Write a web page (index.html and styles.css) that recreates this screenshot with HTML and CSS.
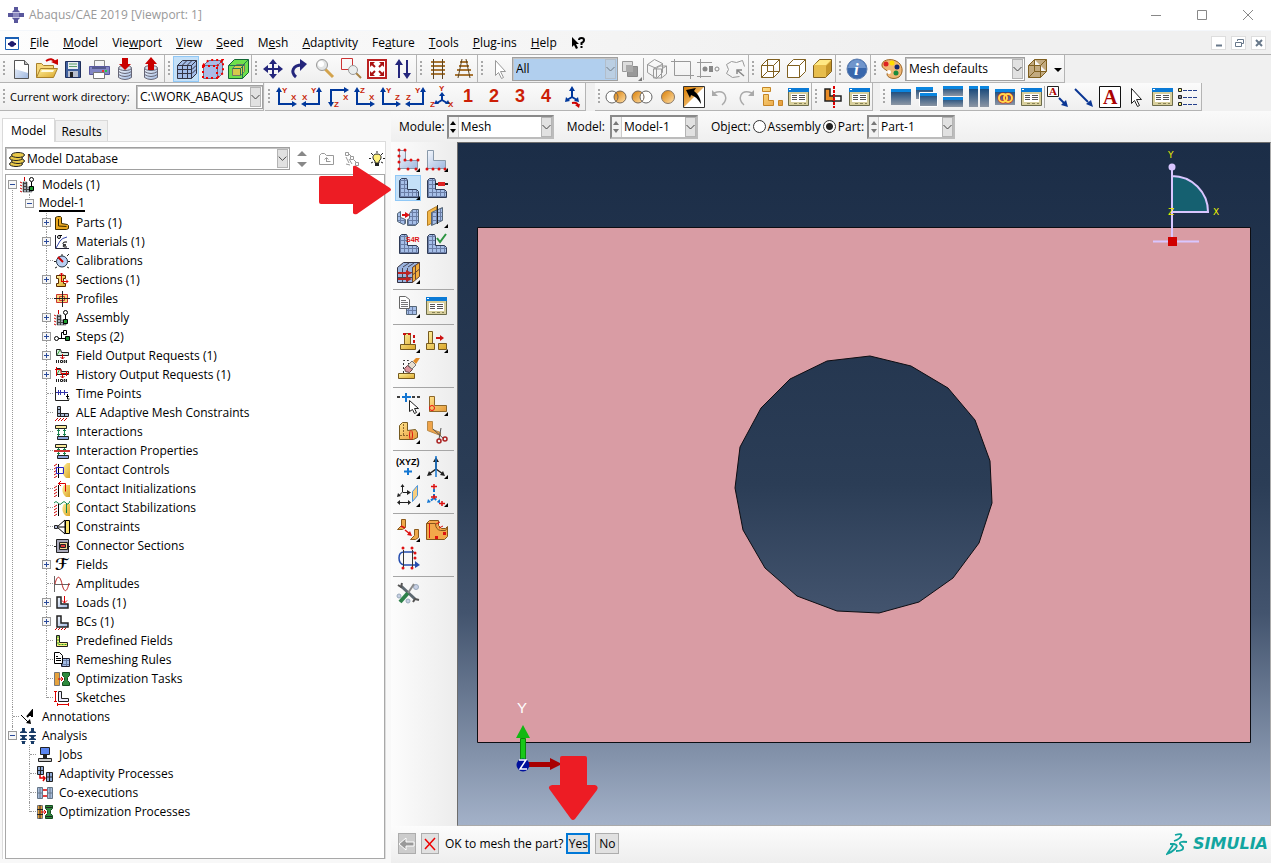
FILE: index.html
```html
<!DOCTYPE html>
<html lang="en">
<head>
<meta charset="utf-8">
<title>Abaqus/CAE 2019 [Viewport: 1]</title>
<link rel="stylesheet" href="styles.css">
</head>
<body>
<svg class="defs" width="0" height="0" aria-hidden="true">
  <defs>
    <linearGradient id="gold" x1="0" y1="0" x2="1" y2="1"><stop offset="0" stop-color="#fff2a0"/><stop offset="1" stop-color="#dba628"/></linearGradient>
    <linearGradient id="orange" x1="0" y1="0" x2="1" y2="1"><stop offset="0" stop-color="#d97c00"/><stop offset="1" stop-color="#ffe2ae"/></linearGradient>
    <linearGradient id="part" x1="0" y1="0" x2="1" y2="1"><stop offset="0" stop-color="#ffe28a"/><stop offset="1" stop-color="#e59a3a"/></linearGradient>
    <linearGradient id="win" x1="0" y1="0" x2="0" y2="1"><stop offset="0" stop-color="#0a3f75"/><stop offset="1" stop-color="#8c96a4"/></linearGradient>
    <linearGradient id="steel" x1="0" y1="0" x2="1" y2="1"><stop offset="0" stop-color="#f4f7fc"/><stop offset="1" stop-color="#9fb8e0"/></linearGradient>
    <pattern id="mesh" width="4" height="4" patternUnits="userSpaceOnUse"><path fill="#a6bfe8" d="M0 0h4v4H0z"/><path fill="#6a7da6" d="M0 0h4v1H1v3H0z"/></pattern>
    <pattern id="meshy" width="3" height="3" patternUnits="userSpaceOnUse"><path fill="#a4adb8" d="M0 0h3v3H0z"/><path fill="#444" d="M0 0h3v1H1v2H0z"/></pattern>
  </defs>
  <symbol id="dlg" viewBox="0 0 24 24"><path fill="#d8cf9c" stroke="#6b6b4a" d="M2.500 3.500h20v17h-20z"/><path fill="#0a7ad6" d="M2 3h21v4H2z"/><path fill="#fff" d="M3 4h2v1H3zM5 9h15v8H5z"/><path stroke="#555" d="M6 10.500h5M6 12.500h5M6 14.500h5M13 10.500h6M13 12.500h6M13 14.500h6"/><path stroke="#8a8458" d="M8 18.500h3M13 18.500h3M18 18.500h2"/></symbol>
  <symbol id="handle" viewBox="0 0 8 24"><path fill="#a8a8a8" d="M3 4h2v2H3zM3 8h2v2H3zM3 12h2v2H3zM3 16h2v2H3z"/></symbol>
  <symbol id="chev" viewBox="0 0 11 20"><path fill="none" stroke="#444" d="M1.500 8l4 4 4-4"/></symbol>
  <symbol id="ax" viewBox="0 0 24 24"><path fill="none" stroke="#00389c" stroke-width="2" d="M5 6v13h13"/><path fill="#00389c" d="M5 2l-3 5h6zM23 19l-5-3v6z"/></symbol>
  <symbol id="lmesh" viewBox="0 0 24 24"><path fill="url(#mesh)" stroke="#2f3b56" d="M3.500 4.500l2-2h5l1 2v9h9l2 2v6h-19z"/></symbol>
  <symbol id="more" viewBox="0 0 24 24"><path d="M24 20v4h-4z"/></symbol>
  <symbol id="asm" viewBox="0 0 16 16"><path fill="url(#meshy)" stroke="#333" stroke-width=".5" d="M3 5h4v5h5v5H3z"/><path stroke="#c00" d="M4.500 0v4M0 5l2 1M0 8l2 1M0 11l2 1M0 14l2 1"/><circle cx="11.500" cy="2.500" r="2" fill="#fff" stroke="#000"/><path stroke="#000" d="M11.500 5v5"/><path fill="#1b9c2d" stroke="#000" d="M9.500 9.500h4v4h-4z"/></symbol>
  <symbol id="outp" viewBox="0 0 16 16"><path fill="#d7efe0" stroke="#222" d="M2.500 1.500h4l1 3h7v3h-12z"/><path stroke="#3a9b3a" d="M3 7l3-5"/><path stroke="#c00" d="M8.500 6v5M6.500 9l2 2 2-2" fill="none"/><path stroke="#222" d="M2.500 12v3M4.500 12v3M12.500 12v3"/><path fill="none" stroke="#222" d="M6.500 12.500h2v2h-2zM10 12.500h1v2h-1z"/></symbol>
  <symbol id="contact" viewBox="0 0 16 16"><path stroke="#c00" d="M0 4l3-2M0 7l3-2M0 10l3-2M0 13l3-2M0 16l3-2"/><path stroke="#000" d="M4.500 2v14"/><path fill="url(#gold)" d="M16 1h-3c-6 4-6 11-1 15h4z"/></symbol>
  <symbol id="ltree" viewBox="0 0 16 16"><path fill="url(#steel)" stroke="#222" stroke-width="1.500" d="M3 2h4v7h7v4H3z"/></symbol>
  <symbol id="opt" viewBox="0 0 16 16"><path fill="#e6a23c" stroke="#777" d="M.5 1.500h5v13h-5z"/><path fill="#2e8b3d" stroke="#174a20" d="M8.500 1.500h7v3l-2 2v3l2 2v3h-7v-3l2-2v-3l-2-2z"/><path stroke="#d00" d="M4 8h5M7 6l2 2-2 2" fill="none"/></symbol>
</svg>

<header class="titlebar">
  <svg class="ico16" viewBox="0 0 16 16"><path fill="#59579c" d="M6 0h4v3l2 2H4l2-2zM4 11h8l-2 2v3H6v-3zM0 6h16v4H0z"/><path fill="#8c8abf" d="M5 5h6v6H5z"/><path stroke="#c9c8e4" d="M4 5.500h8M4 10.500h8"/></svg>
  <h1>Abaqus/CAE 2019 [Viewport: 1]</h1>
  <div class="winbtns">
    <button aria-label="Minimize"><svg viewBox="0 0 12 12"><path d="M1 6.500h10"/></svg></button>
    <button aria-label="Maximize"><svg viewBox="0 0 12 12"><path d="M1.500 1.500h9v9h-9z"/></svg></button>
    <button aria-label="Close"><svg viewBox="0 0 12 12"><path d="M1 1l10 10M11 1L1 11"/></svg></button>
  </div>
</header>

<nav class="menubar">
  <svg class="ico14" viewBox="0 0 14 14"><path fill="#fff" stroke="#1a5fb4" d="M.5 1.500h13v12H.5z"/><path fill="#1a5fb4" d="M0 1h14v2H0z"/><path fill="#201c6e" d="M4 7q3-4 6 0zM4 9q3 4 6 0zM3 7h8v2H3z"/></svg>
  <button><u>F</u>ile</button><button><u>M</u>odel</button><button>Vie<u>w</u>port</button><button><u>V</u>iew</button><button><u>S</u>eed</button><button>M<u>e</u>sh</button><button><u>A</u>daptivity</button><button>Fe<u>a</u>ture</button><button><u>T</u>ools</button><button><u>P</u>lug-ins</button><button><u>H</u>elp</button>
  <button aria-label="Context help"><svg class="ico14" viewBox="0 0 14 14"><path d="M1 1v10l2-2 2 4 2-1-2-4h3z"/><path fill="none" stroke="#000" stroke-width="2" d="M8 4q0-2 2.500-2T13 4q0 2-2.500 3v2M10.500 10v2"/></svg></button>
  <div class="childbtns">
    <button aria-label="Minimize viewport"><svg viewBox="0 0 12 12"><path d="M3 8.500h6" stroke-width="2"/></svg></button>
    <button aria-label="Restore viewport"><svg viewBox="0 0 12 12"><path d="M4.500 4V2.500h6v4H9M2.500 5.500h6v4h-6z"/></svg></button>
    <button aria-label="Close viewport"><svg viewBox="0 0 12 12"><path d="M3 3l6 6M9 3L3 9" stroke-width="2"/></svg></button>
  </div>
</nav>

<div class="toolrow">
  <div class="group"><svg class="handle"><use href="#handle"/></svg>
    <button aria-label="New"><svg viewBox="0 0 24 24"><path fill="url(#steel)" stroke="#555" d="M5.500 3.500h10l4 4v14h-14z"/><path fill="#fff" d="M6 4h9v4h4v8L6 12z"/><path fill="#bbb" stroke="#555" d="M15.500 3.500v4h4"/></svg></button>
    <button aria-label="Open"><svg viewBox="0 0 24 24"><path fill="#f6d77a" stroke="#a8802a" d="M1.500 20.500v-14h5l2 2h10v4"/><path fill="url(#gold)" stroke="#a8802a" d="M1.500 20.500l4-9h17l-4 9z"/><path fill="#fffbe2" d="M7 13h12l-1 2H6z"/><path fill="none" stroke="#c00" stroke-width="2" d="M11 4c4-3 7-2 9 1"/><path fill="#c00" d="M16 5l7-3v6z"/></svg></button>
    <button aria-label="Save"><svg viewBox="0 0 24 24"><path fill="#3f5f9c" stroke="#1f2f5c" d="M4.500 4.500h15v16h-15z"/><path fill="#e9eef2" d="M7 5h10v7H7z"/><path stroke="#5c9f68" d="M8 7h8M8 9.500h8"/><path fill="#b8bfd0" d="M7 14h10v6H7z"/><path fill="#222" d="M9 15h3v5H9z"/></svg></button>
    <button aria-label="Print"><svg viewBox="0 0 24 24"><path fill="#f4f4f4" stroke="#888" d="M7.500 3.500h10v7h-10z"/><path fill="#8286c4" stroke="#5858a0" d="M2.500 9.500h20v8h-20z"/><path fill="#555a8e" d="M5 10h14v2H5z"/><path fill="#fff" stroke="#777" d="M6.500 15.500h11v6h-11z"/><path fill="#e33" d="M15 13h2v2h-2z"/><path fill="#2c4" d="M18 13h2v2h-2z"/></svg></button>
    <button aria-label="Read database"><svg viewBox="0 0 24 24"><path fill="url(#steel)" stroke="#667" d="M5.500 11.500v9q6.500 4 13 0v-9z"/><path fill="none" stroke="#667" d="M5.500 14.500q6.500 4 13 0M5.500 17.500q6.500 4 13 0"/><ellipse cx="12" cy="11" rx="6.500" ry="2.500" fill="#d5dce8" stroke="#667"/><path fill="#c90000" d="M9 1h6v6h3l-6 6-6-6h3z"/></svg></button>
    <button aria-label="Write database"><svg viewBox="0 0 24 24"><path fill="url(#steel)" stroke="#667" d="M5.500 11.500v9q6.500 4 13 0v-9z"/><path fill="none" stroke="#667" d="M5.500 14.500q6.500 4 13 0M5.500 17.500q6.500 4 13 0"/><ellipse cx="12" cy="11" rx="6.500" ry="2.500" fill="#d5dce8" stroke="#667"/><path fill="#c90000" d="M9 13h6V7h3l-6-7-6 7h3z"/></svg></button>
  </div>
  <div class="group"><svg class="handle"><use href="#handle"/></svg>
    <button class="on" aria-label="Mesh edges" aria-pressed="true"><svg viewBox="0 0 24 24"><path fill="#a3bce8" stroke="#334" d="M3.500 8.500l5-5h14v13l-5 5h-14z"/><path fill="none" stroke="#334" d="M3.500 8.500h14v13M17.500 8.500l5-5M8.500 8v13M13.500 8v13M4 12.500h14M4 16.500h14M8.500 8l5-5M13.500 8l5-5M18 12.500l4-4M18 16.500l4-4"/></svg></button>
    <button aria-label="Seeded edges"><svg viewBox="0 0 24 24"><path fill="#aabbe6" stroke="#68748c" d="M3.500 8.500l5-5h14v13l-5 5h-14zM3.500 8.500h14v13M17.500 8.500l5-5"/><path fill="none" stroke="#e00" stroke-width="2" stroke-dasharray="2 3" d="M3 9h14v12H3zM3 8l6-5h14v13l-6 5M17 9l6-6"/></svg></button>
    <button aria-label="Display group"><svg viewBox="0 0 24 24"><path fill="#6fe04c" stroke="#163" d="M2.500 8.500l6-6h14v13l-6 6h-14z"/><path fill="#d8c84c" stroke="#776" d="M6.500 11.500l4-4h8v7l-4 4h-8z"/><path fill="none" stroke="#275" d="M2.500 8.500h14v13M16.500 8.500l6-6M6.500 11.500h8v7M14.500 11.500l4-4"/></svg></button>
  </div>
  <div class="group"><svg class="handle"><use href="#handle"/></svg>
    <button aria-label="Pan"><svg viewBox="0 0 24 24"><path stroke="#24267c" stroke-width="2" d="M12 5v14M5 12h14"/><path fill="#24267c" d="M12 2l4 5H8zM12 22l4-5H8zM2 12l5-4v8zM22 12l-5-4v8z"/></svg></button>
    <button aria-label="Rotate"><svg viewBox="0 0 24 24"><path fill="none" stroke="#24267c" stroke-width="3" d="M9 20C3 15 6 8 15 8"/><path fill="#24267c" d="M13 2l7 5-7 7z"/></svg></button>
    <button aria-label="Magnify"><svg viewBox="0 0 24 24"><path stroke="#d3a34c" stroke-width="3" d="M12 12l8 8"/><circle cx="9" cy="8" r="5.500" fill="#e2e4e4" stroke="#999"/><circle cx="8" cy="7" r="3" fill="#fff"/></svg></button>
    <button aria-label="Box zoom"><svg viewBox="0 0 24 24"><path fill="none" stroke="#c33" d="M2.500 1.500h11v11h-11z"/><path stroke="#a88345" stroke-width="2" d="M17 16l5 5"/><circle cx="14" cy="13" r="4.500" fill="#e9eded" stroke="#999"/></svg></button>
    <button aria-label="Auto-fit"><svg viewBox="0 0 24 24"><path fill="#fff" stroke="#b22" stroke-width="2" d="M3 3h18v18H3z"/><path stroke="#a11" stroke-width="2" d="M6 6l4 4M18 6l-4 4M6 18l4-4M18 18l-4-4"/><path fill="#a11" d="M5 5h5l-5 5zM19 5h-5l5 5zM5 19h5l-5-5zM19 19h-5l5-5z"/></svg></button>
    <button aria-label="Cycle views"><svg viewBox="0 0 24 24"><path stroke="#24267c" stroke-width="2" d="M8 5v16M16 3v16"/><path fill="#24267c" d="M8 2l4 6H4zM16 22l4-6h-8z"/></svg></button>
  </div>
  <div class="group"><svg class="handle"><use href="#handle"/></svg>
    <button aria-label="Parallel view"><svg viewBox="0 0 24 24"><path stroke="#a87534" stroke-width="2" d="M5 5h14M5 9h14M5 13h14M5 17h14"/><path stroke="#5c4421" d="M7.500 2v20M16.500 2v20"/></svg></button>
    <button aria-label="Perspective view"><svg viewBox="0 0 24 24"><path stroke="#a87534" stroke-width="2" d="M8 5h8M7 9h10M5 13h14M3 18h18"/><path stroke="#5c4421" d="M10 2L6 21M14 2l4 19"/></svg></button>
  </div>
  <div class="group"><svg class="handle"><use href="#handle"/></svg>
    <button aria-label="Select"><svg viewBox="0 0 24 24"><path fill="#fff" stroke="#999" d="M8.500 3.500v15l3-3 3 6 2-1-3-6h5z"/></svg></button>
    <div class="combo filter"><select aria-label="Selection filter"><option>All</option></select><svg class="chev"><use href="#chev"/></svg></div>
    <button aria-label="Selection options"><svg viewBox="0 0 24 24"><path fill="#999" stroke="#888" d="M9.500 9.500h10v10h-10z"/><path fill="#ddd" stroke="#999" d="M4.500 4.500h10v10h-10z"/><path fill="#aaa" d="M8 8h7v7H8z"/><use href="#more" opacity=".5"/></svg></button>
    <i class="sep"></i>
    <button aria-label="Select entities inside"><svg viewBox="0 0 24 24"><g fill="none" stroke="#999"><path d="M2.500 7.500l7-5 8 4v9l-6 6-9-6zM2.500 7.500l9 4v9M11.500 11.500l6-5M8.500 12l5-3h8v8l-5 4h-8zM8.500 12h8v9M16.500 12l5-3"/></g></svg></button>
    <button aria-label="Select inside box"><svg viewBox="0 0 24 24"><path fill="none" stroke="#999" d="M3.500 4.500h16v14h-16V2M0 4.500h5M19.500 16v6M17 18.500h6"/></svg></button>
    <button aria-label="Select by type"><svg viewBox="0 0 24 24"><path fill="none" stroke="#999" d="M3.500 2v19M0 5.500h15M0 19.500h14"/><circle cx="8" cy="12" r="2.500" fill="#888"/><path fill="#888" d="M12 9h4v6h-4z"/><circle cx="20" cy="12" r="2" fill="none" stroke="#888"/></svg></button>
    <button aria-label="Select closest"><svg viewBox="0 0 24 24"><path fill="none" stroke="#999" d="M3.500 7.500l5-3 5 1 6-2 2 6M3.500 7.500l2 5-2 4 6 4 7-1"/><path fill="none" stroke="#888" stroke-width="1.500" d="M14 13l7 6M14 17v-4h5"/></svg></button>
  </div>
  <div class="group"><svg class="handle"><use href="#handle"/></svg>
    <button aria-label="Wireframe"><svg viewBox="0 0 24 24"><path fill="#fff" stroke="#806020" d="M3.500 8.500l6-6h12v12l-6 6h-12zM3.500 8.500h12v12M15.500 8.500l6-6M9.500 2.500v12h12M9.500 14.500l-6 6"/></svg></button>
    <button aria-label="Hidden"><svg viewBox="0 0 24 24"><path fill="#fff" stroke="#806020" d="M3.500 8.500l6-6h12v12l-6 6h-12zM3.500 8.500h12v12M15.500 8.500l6-6"/></svg></button>
    <button aria-label="Shaded"><svg viewBox="0 0 24 24"><path fill="#e7bd4c" stroke="#806020" d="M3.500 8.500l6-6h12v12l-6 6h-12z"/><path fill="#c5962a" d="M16 9l5-5v10l-5 6z"/><path fill="#ffe984" d="M4 8l6-5h11l-5 5z"/></svg></button>
  </div>
  <div class="group"><svg class="handle"><use href="#handle"/></svg>
    <button aria-label="Query information"><svg viewBox="0 0 24 24"><circle cx="12" cy="12" r="10" fill="#3867ac" stroke="#6080b0"/><path fill="#7095cb" d="M3 11C4 0 20 0 21 11z"/><text class="info" x="9" y="18">i</text></svg></button>
  </div>
  <div class="group"><svg class="handle"><use href="#handle"/></svg>
    <button aria-label="Color code dialog"><svg viewBox="0 0 24 24"><path fill="#f0b875" stroke="#9a6425" d="M2 9C1 3 10 1 16 4c7 3 8 12 3 16-5 3-12 1-12-3 3-4-4-4-5-8z"/><circle cx="6" cy="7" r="2.500" fill="#d22"/><circle cx="12" cy="6" r="2.500" fill="#fd0"/><circle cx="17" cy="10" r="2.500" fill="#11266e"/><circle cx="16" cy="16" r="2.500" fill="#1b8a3c"/><circle cx="9" cy="15" r="2" fill="#fff"/></svg></button>
    <div class="combo defaults"><select aria-label="Color mapping"><option>Mesh defaults</option></select><svg class="chev"><use href="#chev"/></svg></div>
    <button aria-label="Translucency"><svg viewBox="0 0 24 24"><path fill="#c2aa80" stroke="#806020" d="M2.500 8.500l6-6h12v12l-6 6h-12zM2.500 8.500h12v12M14.500 8.500l6-6M8.500 2.500v12h12M8.500 14.500l-6 6"/></svg></button>
    <button class="slim" aria-label="Translucency menu"><svg viewBox="0 0 12 24"><path d="M2 11h8l-4 4z"/></svg></button>
  </div>
</div>

<div class="toolrow">
  <div class="group"><svg class="handle"><use href="#handle"/></svg>
    <label class="cwdlabel" for="cwd">Current work directory:</label>
    <div class="combo cwd"><select id="cwd"><option>C:\WORK_ABAQUS</option></select><svg class="chev"><use href="#chev"/></svg></div>
  </div>
  <div class="group after-small axes"><svg class="handle"><use href="#handle"/></svg>
    <button aria-label="Front view"><svg viewBox="0 0 24 24"><use href="#ax"/><text x="8" y="8">Y</text><text x="17" y="15">X</text></svg></button>
    <button aria-label="Back view"><svg viewBox="0 0 24 24"><use href="#ax" transform="matrix(-1 0 0 1 24 0)"/><text x="11" y="8">Y</text><text x="2" y="15">X</text></svg></button>
    <button aria-label="Top view"><svg viewBox="0 0 24 24"><use href="#ax" transform="matrix(1 0 0 -1 0 24)"/><text x="17" y="15">X</text><text x="8" y="22">Z</text></svg></button>
    <button aria-label="Bottom view"><svg viewBox="0 0 24 24"><use href="#ax"/><text x="8" y="8">Z</text><text x="17" y="15">X</text></svg></button>
    <button aria-label="Left view"><svg viewBox="0 0 24 24"><use href="#ax"/><text x="8" y="8">Y</text><text x="17" y="15">Z</text></svg></button>
    <button aria-label="Right view"><svg viewBox="0 0 24 24"><use href="#ax" transform="matrix(-1 0 0 1 24 0)"/><text x="11" y="8">Y</text><text x="2" y="15">Z</text></svg></button>
    <button aria-label="Iso view"><svg viewBox="0 0 24 24"><path fill="none" stroke="#00389c" stroke-width="2" d="M12 10v5l-5 3M12 15l5 3"/><path fill="#00389c" d="M12 7l3 4H9zM4 19l2-4 3 4zM20 19l-5 0 3-4z"/><text x="9" y="6">Y</text><text x="0" y="22">Z</text><text x="18" y="22">X</text></svg></button>
    <button class="num">1</button><button class="num">2</button><button class="num">3</button><button class="num">4</button>
    <button aria-label="Save view"><svg viewBox="0 0 24 24"><path fill="none" stroke="#00389c" stroke-width="2" d="M12 5v7l-5 3M12 12l5 3"/><path fill="#00389c" d="M12 1l3 5H9zM5 17l1-5 4 4zM19 17l-5-1 4-4z"/><path fill="none" stroke="#c00" stroke-width="2" d="M12 18q6-1 6 3"/><path fill="#c00" d="M15 20l5-1-1 4z"/></svg></button>
  </div>
  <div class="group after-big"><svg class="handle"><use href="#handle"/></svg>
    <button aria-label="Replace"><svg viewBox="0 0 24 24"><circle cx="8" cy="12" r="6" fill="#fff" stroke="#666"/><circle cx="16" cy="12" r="6" fill="url(#orange)" stroke="#765"/><path fill="none" stroke="#765" d="M12 7.500a6 6 0 010 9"/></svg></button>
    <button aria-label="Remove"><svg viewBox="0 0 24 24"><circle cx="8" cy="12" r="6" fill="url(#orange)" stroke="#765"/><circle cx="16" cy="12" r="6" fill="#fff" stroke="#666"/><path fill="none" stroke="#765" d="M12 7.500a6 6 0 010 9"/></svg></button>
    <button aria-label="Replace all"><svg viewBox="0 0 24 24"><circle cx="12" cy="12" r="6.500" fill="url(#orange)" stroke="#876"/></svg></button>
    <button aria-label="Undo display"><svg viewBox="0 0 24 24"><path fill="#fff" stroke="#333" d="M1.500 1.500h21v21h-21z"/><path fill="url(#orange)" d="M2 22V2h20z"/><path d="M4 5l10-2-2 3c4 3 7 8 7 13-3-5-6-8-10-9l-1 3z"/></svg></button>
    <button aria-label="Undo"><svg viewBox="0 0 24 24"><path fill="none" stroke="#aaa" stroke-width="1.500" d="M6 8c12-5 15 7 8 12"/><path fill="#aaa" d="M4 5v6h6z"/></svg></button>
    <button aria-label="Redo"><svg viewBox="0 0 24 24"><path fill="none" stroke="#aaa" stroke-width="1.500" d="M18 8C6 3 3 15 10 20"/><path fill="#aaa" d="M20 5v6h-6z"/></svg></button>
    <button aria-label="Display group manager"><svg viewBox="0 0 24 24"><path fill="url(#part)" stroke="#c58526" d="M2.500 2.500h8v4h-8zM3.500 9.500h5v6h5v5h-10zM18.500 15.500h4v5h-4z"/></svg></button>
    <button aria-label="Display group dialog"><svg><use href="#dlg"/></svg></button>
  </div>
  <div class="group"><svg class="handle"><use href="#handle"/></svg>
    <button aria-label="View cut"><svg viewBox="0 0 24 24"><path fill="#fff" stroke="#222" stroke-width="1.500" d="M12 11h8v5h-8z"/><path fill="#e98b25" stroke="#222" stroke-width="1.500" d="M4 4h5v7h4v5H4z"/><path stroke="#d00" stroke-width="2" stroke-dasharray="3 1" d="M13 1v22"/></svg></button>
    <button aria-label="View cut manager"><svg><use href="#dlg"/></svg></button>
  </div>
  <div class="group after-mid"><svg class="handle"><use href="#handle"/></svg>
    <button aria-label="Create viewport"><svg viewBox="0 0 24 24"><path fill="url(#win)" d="M2 4h20v16H2z"/><path fill="#0a86e0" d="M2 4h20v3H2z"/></svg></button>
    <button aria-label="Cascade viewports"><svg viewBox="0 0 24 24"><path fill="url(#win)" d="M1 2h17v12H1z"/><path fill="#0a86e0" d="M1 2h17v3H1z"/><path fill="url(#win)" stroke="#fff" d="M4.500 7.500h18v14h-18z"/><path fill="#0a86e0" d="M5 8h17v3H5z"/></svg></button>
    <button aria-label="Tile horizontally"><svg viewBox="0 0 24 24"><path fill="url(#win)" d="M2 1h20v10H2z"/><path fill="url(#win)" d="M2 12h20v10H2z"/><path fill="#0a86e0" d="M2 1h20v3H2zM2 12h20v3H2z"/></svg></button>
    <button aria-label="Tile vertically"><svg viewBox="0 0 24 24"><path fill="url(#win)" d="M2 1h9v21H2zM13 1h9v21h-9z"/><path fill="#0a86e0" d="M2 1h9v3H2zM13 1h9v3h-9z"/></svg></button>
    <button aria-label="Link viewports"><svg viewBox="0 0 24 24"><path fill="url(#win)" d="M2 4h20v16H2z"/><path fill="#0a86e0" d="M2 4h20v3H2z"/><g fill="none" stroke="#c22" stroke-width="3"><circle cx="10" cy="13" r="4"/><circle cx="15" cy="13" r="4"/></g><g fill="none" stroke="#ffd84c" stroke-width="2"><circle cx="10" cy="13" r="4"/><circle cx="15" cy="13" r="4"/></g></svg></button>
    <button aria-label="Viewport annotation options"><svg><use href="#dlg"/></svg></button>
    <i class="sep"></i>
    <button aria-label="Text with arrow"><svg viewBox="0 0 24 24"><path fill="#fff" stroke="#222" d="M1.500 1.500h11v10h-11z"/><text class="serif-a" x="3" y="10">A</text><path stroke="#0a3694" stroke-width="2" d="M13 13l6 6"/><path fill="#0a3694" d="M22 22l-7-2 5-5z"/></svg></button>
    <button aria-label="Create arrow"><svg viewBox="0 0 24 24"><path stroke="#0a3694" stroke-width="2" d="M3 4l13 13"/><path fill="#0a3694" d="M21 22l-7-3 5-4z"/></svg></button>
    <button aria-label="Create text"><svg viewBox="0 0 24 24"><path fill="#fff" stroke="#111" d="M1.500 1.500h21v21h-21z"/><text class="serif-b" x="5" y="19">A</text></svg></button>
    <button aria-label="Edit annotation"><svg viewBox="0 0 24 24"><path fill="#fff" stroke="#222" d="M7.500 3.500v15l3-3 3 6 2-1-3-6h5z"/></svg></button>
    <button aria-label="Annotation manager"><svg><use href="#dlg"/></svg></button>
    <button aria-label="Legend"><svg viewBox="0 0 24 24"><path stroke="#24408c" stroke-dasharray="4 1" d="M7 5.500h15M7 12.500h15M7 19.500h15"/><path fill="#fbf77c" stroke="#222" d="M2.500 3.500h3v3h-3zM2.500 17.500h3v3h-3z"/><path fill="#888" stroke="#222" d="M2.500 10.500h3v3h-3z"/></svg></button>
  </div>
</div>

<main class="work">
  <section class="side">
    <div class="tabs" role="tablist"><button role="tab" aria-selected="true" class="active">Model</button><button role="tab" aria-selected="false">Results</button></div>
    <div class="pane">
      <div class="dbrow">
        <div class="combo db"><svg class="ico16" viewBox="0 0 16 16"><g fill="#e8c84a" stroke="#222"><ellipse cx="7" cy="13" rx="6.500" ry="2.500"/><ellipse cx="9" cy="10" rx="6.500" ry="2.500"/><ellipse cx="7" cy="7" rx="6.500" ry="2.500"/><ellipse cx="9" cy="4" rx="6.500" ry="2.500"/></g></svg><select aria-label="Database"><option>Model Database</option></select><svg class="chev"><use href="#chev"/></svg></div>
        <button aria-label="Move up or down"><svg class="ico16" viewBox="0 0 16 16"><path fill="#888" d="M8 0l5 5H3zM8 16l5-5H3z"/></svg></button>
        <button aria-label="Up one level"><svg class="ico16" viewBox="0 0 16 16"><path fill="none" stroke="#999" d="M.5 13.500v-9l2-2h3l2 2h7v9zM7.500 11V7M5.500 8.500l2-2 2 2M7.500 10.500h4"/></svg></button>
        <button aria-label="Expand tree"><svg class="ico16" viewBox="0 0 16 16"><path fill="none" stroke="#999" d="M1.500 1.500h3v3h-3zM6.500 5.500h3v3h-3zM11.500 11.500h3v3h-3zM5 3l2 2M10 9l2 2M2 6l3 6M5 8l3 5M2 13l4 1"/></svg></button>
        <button aria-label="Tips"><svg class="ico16" viewBox="0 0 16 16"><path stroke="#222" d="M0 7.500h2M14 7.500h2M2 2l2 2M14 2l-2 2M8 0v2M2 12l2-1M14 12l-2-1"/><path fill="#fff27c" stroke="#222" d="M8 3c-5 0-5 5-2 7v2h4v-2c3-2 3-7-2-7z"/><path fill="#222" d="M6 12h4v3H6z"/></svg></button>
      </div>
      <div class="treebox">
        <ul class="tree">
          <li><div class="row"><button class="tog" aria-label="Collapse"></button><svg class="ti"><use href="#asm"/></svg><span>Models (1)</span></div>
            <ul>
              <li><div class="row"><button class="tog" aria-label="Collapse"></button><a class="current" href="#model-1">Model-1</a></div>
                <ul>
                  <li><div class="row"><button class="tog plus" aria-label="Expand"></button><svg class="ti" viewBox="0 0 16 16"><path fill="#e9a820" stroke="#3a2a00" d="M1.500 2.500l2-1h3l1 1v6l6 1 1 1v3l-2 1h-11z"/><path fill="none" stroke="#3a2a00" d="M4.500 4v7l8 .5"/></svg><span>Parts (1)</span></div></li>
                  <li><div class="row"><button class="tog plus" aria-label="Expand"></button><svg class="ti" viewBox="0 0 16 16"><path fill="none" stroke="#223" d="M1.500 1v13.500H15"/><path fill="none" stroke="#34a" d="M2 14L6 7q2-3 7-4"/><circle cx="5" cy="3" r="1.500" fill="none" stroke="#000"/><path fill="none" stroke="#000" d="M5 1.500h3M13 8h-2q-2 0-2 1.500t2 1.500h1-1q-2 0-2 1t2 1h2"/></svg><span>Materials (1)</span></div></li>
                  <li><div class="row"><i class="stub"></i><svg class="ti" viewBox="0 0 16 16"><circle cx="8" cy="8.500" r="5.500" fill="#b9cff2" stroke="#234"/><path stroke="#c00" stroke-width="2" d="M4 4l5 5"/><path stroke="#222" d="M13 3l2-2M0 8.500h2M14 8.500h2M3 14l-2 1M13 14l2 1M8 1v2"/></svg><span>Calibrations</span></div></li>
                  <li><div class="row"><button class="tog plus" aria-label="Expand"></button><svg class="ti" viewBox="0 0 16 16"><path fill="url(#gold)" stroke="#5a2a00" d="M2.500 3.500h9v3h-2v5h2v3h-9v-3h2v-5h-2z"/><path fill="none" stroke="#d00" d="M7.500 10V1M5.500 3l2-2 2 2M7 9.500h7M12 7.500l2 2-2 2"/></svg><span>Sections (1)</span></div></li>
                  <li><div class="row"><i class="stub"></i><svg class="ti" viewBox="0 0 16 16"><path fill="#f6dc7a" stroke="#c33" d="M2.500 3.500h11v8h-11z"/><path fill="none" stroke="#c33" d="M5.500 5.500h5v4h-5z"/><path stroke="#222" d="M8.500 0v16M0 7.500h16"/></svg><span>Profiles</span></div></li>
                  <li><div class="row"><button class="tog plus" aria-label="Expand"></button><svg class="ti"><use href="#asm"/></svg><span>Assembly</span></div></li>
                  <li><div class="row"><button class="tog plus" aria-label="Expand"></button><svg class="ti" viewBox="0 0 16 16"><circle cx="2.500" cy="9.500" r="2" fill="#fff" stroke="#000"/><path fill="none" stroke="#000" d="M4.500 9.500h7M7.500 9.500v-6h2"/><path fill="#fff" stroke="#000" d="M9.500 1.500h3v4h-3z"/><path fill="#1b8c2d" stroke="#000" d="M11.500 7.500h4v4h-4z"/></svg><span>Steps (2)</span></div></li>
                  <li><div class="row"><button class="tog plus" aria-label="Expand"></button><svg class="ti"><use href="#outp"/></svg><span>Field Output Requests (1)</span></div></li>
                  <li><div class="row"><button class="tog plus" aria-label="Expand"></button><svg class="ti" viewBox="0 0 16 16"><use href="#outp"/><path fill="none" stroke="#d00" d="M2.500 0v9M1 2.500h6v4h8M12.500 4v5"/></svg><span>History Output Requests (1)</span></div></li>
                  <li><div class="row"><i class="stub"></i><svg class="ti" viewBox="0 0 16 16"><path fill="none" stroke="#222" d="M1.500 1v13.500H15"/><path stroke="#33a" d="M2 6.500h12M4.500 4v5M6.500 4v5M10.500 4v5"/><path fill="none" stroke="#000" d="M13.500 8v5h2M12 10.500h3"/></svg><span>Time Points</span></div></li>
                  <li><div class="row"><i class="stub"></i><svg class="ti" viewBox="0 0 16 16"><path fill="#aabad4" stroke="#222" d="M3.500 1.500h3v7h8v3h-11zM3.500 4.500h3M3.500 8.500h3v3M10.500 8.500v3"/><path stroke="#c00" d="M1 16l3-3M4 16l3-3M7 16l3-3M10 16l3-3"/></svg><span>ALE Adaptive Mesh Constraints</span></div></li>
                  <li><div class="row"><i class="stub"></i><svg class="ti" viewBox="0 0 16 16"><path fill="#fbea9a" stroke="#222" d="M1.500 1.500h11v3h-11z"/><path fill="#8ea6dc" stroke="#222" d="M3.500 12.500h11v3h-11z"/><path stroke="#19814e" d="M4.500 5v7M10.500 5v7M3 6.500h3M3 10.500h3M9 6.500h3M9 10.500h3"/></svg><span>Interactions</span></div></li>
                  <li><div class="row"><i class="stub"></i><svg class="ti" viewBox="0 0 16 16"><path fill="#fbea9a" stroke="#222" d="M1.500 1.500h11v3h-11z"/><path fill="#8ea6dc" stroke="#222" d="M3.500 12.500h11v3h-11z"/><path stroke="#19814e" d="M4.500 5v7M10.500 5v7M3 6.500h3M3 10.500h3M9 6.500h3M9 10.500h3"/><path stroke="#c33" stroke-width="2" d="M0 8h16"/></svg><span>Interaction Properties</span></div></li>
                  <li><div class="row"><i class="stub"></i><svg class="ti" viewBox="0 0 16 16"><use href="#contact"/><path fill="none" stroke="#22c" d="M2.500 5.500h7v6h-7z"/></svg><span>Contact Controls</span></div></li>
                  <li><div class="row"><i class="stub"></i><svg class="ti" viewBox="0 0 16 16"><svg y="4" width="16" height="12" viewBox="0 4 16 12"><use href="#contact" width="16" height="16"/></svg><path fill="none" stroke="#d00" d="M4 2.500h7.500v8M7 0L4.500 2.500 7 5"/></svg><span>Contact Initializations</span></div></li>
                  <li><div class="row"><i class="stub"></i><svg class="ti" viewBox="0 0 16 16"><svg y="4" width="16" height="12" viewBox="0 4 16 12"><use href="#contact" width="16" height="16"/></svg><path fill="none" stroke="#18884c" d="M0 3q2-3 4 0t4 0 4 0 4-2M12.500 4v9"/></svg><span>Contact Stabilizations</span></div></li>
                  <li><div class="row"><i class="stub"></i><svg class="ti" viewBox="0 0 16 16"><path fill="#fff" stroke="#000" d="M3 8l8-7v14zM3 8h8"/><path fill="#f8e26c" stroke="#000" d="M11.500 1.500h4v13h-4z"/><path fill="#b8c0e0" stroke="#222" d="M.5 6.500h3v3h-3z"/></svg><span>Constraints</span></div></li>
                  <li><div class="row"><i class="stub"></i><svg class="ti" viewBox="0 0 16 16"><path fill="#aab" stroke="#222" d="M2.500 1.500h12v13h-12z"/><path fill="#f4d890" stroke="#222" d="M5.500 4.500h8v7h-8z"/><path fill="none" stroke="#222" d="M0 8.500h3M14.500 8.500H16"/><path fill="#d33" stroke="#222" d="M6.500 6.500h5v3h-5z"/></svg><span>Connector Sections</span></div></li>
                  <li><div class="row"><button class="tog plus" aria-label="Expand"></button><svg class="ti" viewBox="0 0 16 16"><text class="script" x="1" y="13">ℱ</text></svg><span>Fields</span></div></li>
                  <li><div class="row"><i class="stub"></i><svg class="ti" viewBox="0 0 16 16"><path stroke="#666" d="M.5 0v16M0 8.500h16"/><path fill="none" stroke="#b22" d="M1 8c2-9 5-9 7 0s5 9 7-1"/></svg><span>Amplitudes</span></div></li>
                  <li><div class="row"><button class="tog plus" aria-label="Expand"></button><svg class="ti" viewBox="0 0 16 16"><use href="#ltree"/><path fill="none" stroke="#d00" d="M10.500 1v7M8 5.500l2.500 2.500L13 5.500"/></svg><span>Loads (1)</span></div></li>
                  <li><div class="row"><button class="tog plus" aria-label="Expand"></button><svg class="ti" viewBox="0 0 16 16"><use href="#ltree"/><path stroke="#c00" d="M1 16l2-2M4 16l2-2M7 16l2-2M10 16l2-2"/></svg><span>BCs (1)</span></div></li>
                  <li><div class="row"><i class="stub"></i><svg class="ti" viewBox="0 0 16 16"><path fill="#f9ee7c" stroke="#222" d="M2.500 2.500h3v7h8v4h-11z"/><path fill="none" stroke="#292" stroke-dasharray="2 1" d="M4 3v8.500h9"/></svg><span>Predefined Fields</span></div></li>
                  <li><div class="row"><i class="stub"></i><svg class="ti" viewBox="0 0 16 16"><path fill="url(#mesh)" stroke="#223" d="M7.500 6.500h8v8h-8z"/><path fill="#fff" stroke="#000" d="M.5.5h5l3 3v8h-8zM2 4.500h2M2 6.500h5M2 8.500h5"/></svg><span>Remeshing Rules</span></div></li>
                  <li><div class="row"><i class="stub"></i><svg class="ti"><use href="#opt"/></svg><span>Optimization Tasks</span></div></li>
                  <li><div class="row"><i class="stub"></i><svg class="ti" viewBox="0 0 16 16"><path fill="#eef" stroke="#222" d="M4.500 1.500h3v7h7v3h-10z"/><path fill="none" stroke="#d00" d="M1.500 1v11M0 1.500h3M0 11.500h3M3 14.500h12M3.500 13v3M14.500 13v3"/></svg><span>Sketches</span></div></li>
                </ul>
              </li>
            </ul>
          </li>
          <li><div class="row"><i class="stub"></i><svg class="ti" viewBox="0 0 16 16"><path stroke="#000" d="M1 6l7 7"/><path d="M11 15l-5-1 4-4z"/><path fill="none" stroke="#000" stroke-width="2" d="M7 8l5-6v6M9 6h3"/></svg><span>Annotations</span></div></li>
          <li><div class="row"><button class="tog" aria-label="Collapse"></button><svg class="ti" viewBox="0 0 16 16"><path fill="#173a66" d="M2 0h3v3l2 1v1H0V4l2-1zM0 7h7v1L5 9v1l2 1v1H0v-1l2-1V9L0 8zM1 13h5l-1 1v2H2v-2zM11 0h3v3l2 1v1H9V4l2-1zM9 7h7v1l-2 1v1l2 1v1H9v-1l2-1V9L9 8zM10 13h5l-1 1v2h-3v-2z"/></svg><span>Analysis</span></div>
            <ul>
              <li><div class="row"><i class="stub"></i><svg class="ti" viewBox="0 0 16 16"><path fill="#5b86f0" stroke="#222" d="M3.500.5h9v7h-9z"/><path fill="#222" d="M6 8h4v3H6z"/><path fill="#ccc" stroke="#222" d="M1.500 11.500h13v3h-13z"/></svg><span>Jobs</span></div></li>
              <li><div class="row"><i class="stub"></i><svg class="ti" viewBox="0 0 16 16"><path fill="#8da8d4" stroke="#222" d="M.5.500h6v8h-6zM3.500.5v8M.5 4.500h6M9.500 6.500h6v9h-6zM12.500 6.500v9M9.500 11h6"/><path fill="none" stroke="#d00" stroke-width="1.500" d="M3 9v3h5M6 10l2 2-2 3"/></svg><span>Adaptivity Processes</span></div></li>
              <li><div class="row"><i class="stub"></i><svg class="ti" viewBox="0 0 16 16"><path fill="#a9bddc" stroke="#678" d="M.5 2.500h5v11h-5zM10.500 2.500h5v11h-5zM3 2.500v11M13 2.500v11M.5 8h5M10.500 8h5"/><path stroke="#d00" stroke-width="1.500" d="M6 5h4M6 11h4"/></svg><span>Co-executions</span></div></li>
              <li><div class="row"><i class="stub"></i><svg class="ti" viewBox="0 0 16 16"><use href="#opt"/><path stroke="#222" d="M0 5.500h6M0 10.500h6M3 1v14M9 3.500h6M9 12.500h6"/></svg><span>Optimization Processes</span></div></li>
            </ul>
          </li>
        </ul>
      </div>
    </div>
  </section>

  <section class="stage">
    <div class="context">
      <label for="module">Module:</label>
      <div class="combo sunk module"><span class="spin"><svg viewBox="0 0 8 18"><path d="M4 3l3 4H1zM4 15l3-4H1z"/></svg></span><select id="module"><option>Mesh</option></select><svg class="chev"><use href="#chev"/></svg></div>
      <label for="model">Model:</label>
      <div class="combo sunk model"><span class="spin dim"><svg viewBox="0 0 8 18"><path d="M4 3l3 4H1zM4 15l3-4H1z"/></svg></span><select id="model"><option>Model-1</option></select><svg class="chev"><use href="#chev"/></svg></div>
      <div class="object"><span>Object:</span>
        <input type="radio" name="obj" id="assembly"><label for="assembly">Assembly</label>
        <input type="radio" name="obj" id="part-r" checked><label for="part-r">Part:</label>
      </div>
      <div class="combo sunk partsel"><span class="spin dim"><svg viewBox="0 0 8 18"><path d="M4 3l3 4H1zM4 15l3-4H1z"/></svg></span><select aria-label="Part"><option>Part-1</option></select><svg class="chev"><use href="#chev"/></svg></div>
    </div>

    <div class="canvasrow">
      <aside class="toolbox">
        <div class="tools">
          <button aria-label="Seed part"><svg viewBox="0 0 24 24"><path fill="url(#steel)" stroke="#89a" d="M3.500 2.500h6v10h12v8h-18z"/><g fill="#d11"><circle cx="3" cy="2" r="1.500"/><circle cx="9" cy="2" r="1.500"/><circle cx="3" cy="8" r="1.500"/><circle cx="3" cy="14" r="1.500"/><circle cx="3" cy="21" r="1.500"/><circle cx="9" cy="12" r="1.500"/><circle cx="15" cy="12" r="1.500"/><circle cx="22" cy="12" r="1.500"/><circle cx="12" cy="21" r="1.500"/><circle cx="20" cy="21" r="1.500"/></g><use href="#more"/></svg></button>
          <button aria-label="Seed edges"><svg viewBox="0 0 24 24"><path fill="url(#steel)" stroke="#89a" d="M3.500 2.500h6v10h12v8h-18z"/><g fill="#d11"><circle cx="3" cy="21" r="1.500"/><circle cx="9" cy="21" r="1.500"/><circle cx="15" cy="21" r="1.500"/><circle cx="21" cy="21" r="1.500"/></g><use href="#more"/></svg></button>
          <button class="on" aria-label="Mesh part"><svg viewBox="0 0 24 24"><use href="#lmesh"/><use href="#more"/></svg></button>
          <button aria-label="Assign mesh controls"><svg viewBox="0 0 24 24"><use href="#lmesh"/><path stroke="#222" stroke-width="2" d="M11 8h13"/><path fill="#d22" d="M14 6h7v4h-7z"/></svg></button>
          <button aria-label="Bottom-up mesh"><svg viewBox="0 0 24 24"><path fill="url(#mesh)" stroke="#567" d="M1.500 9.500l3-2v6l5 2v4l-2 1-6-3zM13.500 9.500l3-4h6v13l-3 3h-8v-6l2-1z"/><path stroke="#d11" stroke-width="2" d="M6 11h5"/><path fill="#d11" d="M9 8l5 3-5 3z"/></svg></button>
          <button aria-label="Associate mesh"><svg viewBox="0 0 24 24"><path fill="#f2b648" stroke="#b57d22" d="M3.500 7.500l9-5v14l-9 5z"/><path fill="url(#mesh)" stroke="#567" d="M7.500 8.500l11-5v13l-11 5z"/><path stroke="#222" d="M13.500 1v19"/><use href="#more"/></svg></button>
          <button aria-label="Element type"><svg viewBox="0 0 24 24"><use href="#lmesh"/><path fill="#f7f7f7" d="M12 2h12v8H12z"/><text class="s4r" x="10" y="10">S4R</text></svg></button>
          <button aria-label="Verify mesh"><svg viewBox="0 0 24 24"><use href="#lmesh"/><path fill="none" stroke="#2c9440" stroke-width="2" d="M13 6l3 4 6-8"/></svg></button>
          <button aria-label="Stack direction"><svg viewBox="0 0 24 24"><path fill="#9bb3de" stroke="#334" d="M1.500 7.500l6-5h16l-7 5v15h-15z"/><path stroke="#445" d="M2 12.500h14M2 17.500h14M6.500 8v14M11.500 8v14M7 7l6-4M12 7l6-4"/><path fill="#f2ad3c" stroke="#643" d="M16.500 7.500l7-5v14l-7 6zM19.500 5.500v14M16.500 15l7-6"/><path stroke="#b22" stroke-width="2" d="M2 13h9M2 19h9"/><path fill="#b22" d="M10 10l6 3-6 3zM10 16l6 3-6 3z"/><use href="#more"/></svg></button>
        </div>
        <div class="tools">
          <button aria-label="Create remeshing rule"><svg viewBox="0 0 24 24"><path fill="url(#mesh)" stroke="#567" d="M10.500 12.500h10v8h-10z"/><path fill="#fff" stroke="#666" d="M3.500 2.500h6l4 3v9h-10z"/><path stroke="#777" d="M5 6.500h5M5 8.500h7M5 10.500h7M5 12.500h7"/><use href="#more"/></svg></button>
          <button aria-label="Remeshing rule manager"><svg><use href="#dlg"/></svg></button>
        </div>
        <div class="tools">
          <button aria-label="Virtual topology"><svg viewBox="0 0 24 24"><path fill="url(#gold)" stroke="#765a20" d="M8.500 4.500h6v11h-6zM4.500 15.500h15v5h-15z"/><path fill="none" stroke="#c11" stroke-width="2" stroke-dasharray="3 2" d="M7 5h8M18 6v10"/><use href="#more"/></svg></button>
          <button aria-label="Partition edge"><svg viewBox="0 0 24 24"><path fill="url(#gold)" stroke="#765a20" d="M4.500 2.500h4v12h-4zM2.500 14.500h8v6h-8zM14.500 14.500h8v6h-8z"/><path stroke="#c11" stroke-width="2" d="M12 9h5"/><path fill="#c11" d="M16 6l4 3-4 3z"/><use href="#more"/></svg></button>
          <button aria-label="Delete topology"><svg viewBox="0 0 24 24"><path fill="url(#gold)" stroke="#765a20" d="M2.500 16.500h16v5h-16z"/><path fill="none" stroke="#333" stroke-dasharray="2 2" d="M7.500 16V3.500h5V8"/><path fill="#dc939c" stroke="#644" d="M11.500 8.500l5 4-3 3-4-1-1-3z"/><path fill="#e8ddce" stroke="#777" d="M12 8l4-4 4 4-4 4z"/><path fill="#e38b25" d="M17 4l3-3h4l-4 6z"/></svg></button>
        </div>
        <div class="tools">
          <button aria-label="Partition edge at point"><svg viewBox="0 0 24 24"><path stroke="#000" stroke-width="1.500" stroke-dasharray="3 2" d="M1 5h8M16 5h8"/><path stroke="#1376d2" stroke-width="2" d="M10 1v9M6 5h9"/><path fill="#fff" stroke="#222" d="M13.500 8.500v11l3-2 2 4 2-1-2-4h4z"/><use href="#more"/></svg></button>
          <button aria-label="Partition face"><svg viewBox="0 0 24 24"><path fill="url(#part)" stroke="#8d672b" d="M5.500 4.500h5v9h12v6h-17z"/><circle cx="8" cy="16" r="2.500" fill="none" stroke="#e11"/><use href="#more"/></svg></button>
          <button aria-label="Partition cell"><svg viewBox="0 0 24 24"><path fill="url(#part)" stroke="#765a20" d="M3.500 5.500l3-3h5v8l8-1 2 3v5l-4 2h-14z"/><path fill="none" stroke="#8d672b" stroke-dasharray="2 1" d="M7.500 4v11M4 15.500h8"/><ellipse cx="15" cy="15" rx="1.500" ry="4.500" fill="none" stroke="#d11"/><use href="#more"/></svg></button>
          <button aria-label="Cut partition"><svg viewBox="0 0 24 24"><path fill="#efa44a" stroke="#b98a4a" d="M3.500 1.500h5v8l8 3v3l-13-5z"/><path stroke="#555" d="M9 9l11 10M17 8l-2 11"/><g fill="none" stroke="#a22" stroke-width="1.500"><circle cx="15" cy="21" r="2"/><circle cx="21" cy="19" r="2"/></g></svg></button>
        </div>
        <div class="tools">
          <button aria-label="Create datum point"><svg viewBox="0 0 24 24"><text class="xyz" x="0" y="10">(XYZ)</text><path stroke="#1376d2" stroke-width="2" d="M12 13v7M8 16.500h8"/><use href="#more"/></svg></button>
          <button aria-label="Create datum axis"><svg viewBox="0 0 24 24"><path fill="none" stroke="#222" stroke-width="1.500" d="M12 5v9l-7 5M12 14l7 5"/><path fill="#222" d="M12 2l3 5H9zM3 21l2-5 3 4zM21 21l-5-1 3-4z"/><path stroke="#1376d2" stroke-width="1.500" d="M12 1v21"/><use href="#more"/></svg></button>
          <button aria-label="Create datum plane"><svg viewBox="0 0 24 24"><path fill="none" stroke="#222" d="M6.500 3v6l-4 4M7 9.500h6M3 19.500h10"/><path fill="#222" d="M6.500 1l2 3h-4zM11 7l4 2.500-4 2.500zM12 17l3 2.500-3 2.500zM4 17l-3 2.500L4 22zM1 14l1-4 3 3z"/><path fill="#f7ce80" stroke="#4b94dc" d="M16.500 8.500l5-6v10l-5 6z"/><use href="#more"/></svg></button>
          <button aria-label="Create datum system"><svg viewBox="0 0 24 24"><path fill="none" stroke="#1376d2" stroke-width="2" stroke-dasharray="3 2" d="M10 6v9l-5 4M10 15l5 4"/><path stroke="#d11" stroke-width="1.500" d="M10 1v5M7 3.500h6M10 12v4M7 14h6M18 18v5M15 20.500h6"/><path fill="#1376d2" d="M3 20l1-4 3 3zM16 20l-3-1 3-3z"/><use href="#more"/></svg></button>
        </div>
        <div class="tools">
          <button aria-label="Edit mesh"><svg viewBox="0 0 24 24"><path fill="#efa94a" stroke="#8d5a1b" d="M5.500 1.500h4v8l-3 2h-5l4-4zM18.500 11.500h4v8l-3 2h-5l4-4z"/><path stroke="#d11" stroke-width="1.500" d="M5 8l4 2M9 12l5 4"/><path fill="#d11" d="M16 18l-5-1 3-4z"/><use href="#more"/></svg></button>
          <button aria-label="Edit geometry"><svg viewBox="0 0 24 24"><path fill="#f2a84a" stroke="#86551a" d="M2.500 5.500l3-3h9v5l3 3h4l2-2v10l-3 3h-18z"/><path fill="none" stroke="#86551a" d="M2.500 5.500h9q0 6 5 7h5l2-3"/><path fill="none" stroke="#d11" d="M5.500 5v15M12 6l4-2M15 10l4-2"/><path fill="#d11" d="M11 18h3v3h-3zM19 14h3v3h-3z"/></svg></button>
          <button aria-label="Repair edges"><svg viewBox="0 0 24 24"><path fill="none" stroke="#234cae" stroke-width="1.500" d="M18 6H8q-5 0-5 6t5 7h12"/><path stroke="#333" d="M7.500 4v17M16.500 4v17"/><path fill="#234cae" d="M19 15l5 4-5 3z"/><g fill="#d11"><circle cx="7" cy="2" r="1.500"/><circle cx="16" cy="2" r="1.500"/><circle cx="19" cy="7" r="1.500"/><circle cx="19" cy="12" r="1.500"/><circle cx="7" cy="22" r="1.500"/><circle cx="16" cy="22" r="1.500"/></g></svg></button>
        </div>
        <div class="tools">
          <button aria-label="Tools"><svg viewBox="0 0 24 24"><circle cx="20" cy="6" r="2.500" fill="#c7cfe4" stroke="#9ab"/><circle cx="3" cy="15" r="2" fill="#c7cfe4" stroke="#9ab"/><circle cx="12" cy="20" r="2" fill="#c7cfe4" stroke="#9ab"/><path stroke="#5d6870" stroke-width="3" d="M5 5l14 13"/><path stroke="#2d804a" stroke-width="4" d="M4 21l8-9"/><path stroke="#888" stroke-width="2" d="M12 12l6-9"/><path fill="none" stroke="#555" stroke-width="2" d="M2 4l3 2 1-4M17 21l2-3 4 1"/></svg></button>
        </div>
        <svg class="callout" viewBox="0 0 72 50" aria-hidden="true"><path fill="#ed1c24" d="M2 11h32V2q0-2 3-1l34 22q2 2 0 3L38 49q-3 1-4-1v-9H2q-2 0-2-2V13q0-2 2-2z"/></svg>
      </aside>
      <div class="viewport">
        <svg viewBox="0 0 812 682" role="img" aria-label="Plate with a circular hole">
          <path fill="#d99ca4" stroke="#0d0d12" fill-rule="evenodd" d="M19.500 84.500h773v515h-773zM412 213l41 10 37 22 27 32 15 41 2 42-13 40-26 35-34 24-40 11-42-2-40-15-32-28-22-38-8-42 5-41 21-39 29-29 37-18z"/>
          <path fill="#156070" d="M714 69V33a36 36 0 0136 36z"/>
          <path fill="none" stroke="#d9c6ff" stroke-width="2" d="M714 24v74M714 69h36a36 36 0 00-36-36M695 98.500h46"/>
          <circle cx="714" cy="24" r="3.500" fill="#d9c6ff"/>
          <path fill="#d00000" d="M710 94h9v9h-9z"/>
          <text class="axis" x="710" y="15">Y</text><text class="axis" x="755" y="72">X</text><text class="axis" x="710" y="72">Z</text>
          <text class="triad" x="59" y="570">Y</text>
          <path fill="#18c818" stroke="#0a8a0a" d="M62.500 595.500h5v22h-5z"/><path fill="#12b812" d="M65 582l7 13H58z"/>
          <path fill="#a80000" d="M70 619h23v5H70zM92 615l12 6-12 6z"/>
          <circle cx="65" cy="622" r="6.500" fill="#00109c"/><path fill="none" stroke="#fff" stroke-width="1.500" d="M61 617h7l-6 9h7"/>
          <path fill="#ed1c24" d="M104 613h23q2 0 2 2v27h8q4 1 2 5l-22 29q-2 2-4 0L92 647q-3-4 2-5h8v-27q0-2 2-2z"/>
        </svg>
      </div>
    </div>

    <footer class="prompt">
      <button class="pb off" aria-label="Previous"><svg viewBox="0 0 16 16"><path fill="#999" stroke="#fff" d="M0 8l7-6v4h8v4H7v4z"/></svg></button>
      <button class="pb" aria-label="Cancel"><svg viewBox="0 0 16 16"><path stroke="#e00" stroke-width="1.500" d="M3 3l10 11M13 2L3 13"/></svg></button>
      <span class="question">OK to mesh the part?</span>
      <button class="pb default">Yes</button>
      <button class="pb">No</button>
      <div class="brand"><svg viewBox="0 0 22 24"><path fill="none" stroke="#12a5a0" stroke-width="1.800" d="M9 3q8-2 6 1-1 3-7 5M4 12h4q5 1 1 5-3 3-8 5l6-9M21 10q-8-1-7 2l3 3q1 4-7 4"/></svg><span>SIMULIA</span></div>
    </footer>
  </section>
</main>
</body>
</html>
```
FILE: styles.css
```css
* { box-sizing: border-box; }
html, body { height: 100%; }
body {
  margin: 0;
  display: flex;
  flex-direction: column;
  font: 12px/16px "Open Sans", "Noto Sans", sans-serif;
  color: #000;
  background: #f0f0f0;
  overflow: hidden;
}
button, select, input { font: inherit; color: inherit; margin: 0; }
button { padding: 0; border: 0; background: none; white-space: nowrap; }
svg { display: block; flex: none; }
.defs { position: absolute; }
.ico16 { width: 16px; height: 16px; }
.ico14 { width: 14px; height: 14px; }

.titlebar { display: flex; align-items: center; height: 30px; flex: none; padding-left: 8px; gap: 5px; background: #fff; color: #999; }
.titlebar h1 { margin: 0; font-size: 12px; font-weight: 400; }
.winbtns { margin-left: auto; display: flex; }
.winbtns button { width: 46px; height: 28px; display: grid; place-items: center; }
.winbtns svg { width: 12px; height: 12px; fill: none; stroke: #888; }

.menubar { display: flex; align-items: center; gap: 14px; height: 25px; flex: none; padding-left: 5px; background: linear-gradient(90deg, #fdfdfd, #f0f0f0 70%); border-top: 1px solid #f4f7fb; border-bottom: 1px solid #b0b0b0; }
.menubar > svg { margin-right: -3px; }
.childbtns { margin-left: auto; display: flex; gap: 5px; padding-right: 5px; }
.childbtns button { width: 15px; height: 14px; display: grid; place-items: center; background: #fff; border: 1px solid #ddd; }
.childbtns svg { width: 12px; height: 12px; fill: none; stroke: #68788a; }

.toolrow { display: flex; height: 28px; flex: none; }
.group { display: flex; align-items: center; background: linear-gradient(#fbfbfb, #efefef); border-right: 1px solid #b4b4b4; border-bottom: 1px solid #b4b4b4; }
.after-small { margin-left: 1px; }
.after-mid { margin-left: 7px; }
.after-big { margin-left: 9px; }
.handle { width: 8px; height: 24px; }
.group > button { width: 26px; height: 26px; display: grid; place-items: center; }
.group > button > svg { width: 24px; height: 24px; }
.group > button.slim { width: 13px; }
.group > button.slim > svg { width: 12px; }
button.on { background: #c4e0f8; border: 1px solid #90c8f6; }
.sep { width: 1px; height: 22px; background: #aaa; }
.axes text { font: bold 8px "Liberation Sans", sans-serif; fill: #c8260a; }
.group > .num { font: bold 18px "Liberation Sans", sans-serif; color: #cc1e06; }
.info { font: italic bold 17px "Liberation Serif", serif; fill: #fff; }
.serif-a { font: bold 11px "Liberation Serif", serif; fill: #a00; }
.serif-b { font: bold 20px "Liberation Serif", serif; fill: #a00; }
.script { font: bold 16px "DejaVu Sans", serif; }
.s4r { font: bold 7px "Liberation Sans", sans-serif; fill: #d11; }
.xyz { font: bold 9px "Liberation Sans", sans-serif; }

.combo { display: flex; align-items: center; height: 24px; padding: 1px; background: #fff; border: 1px solid #a0a0a0; box-shadow: inset 1px 1px 0 #c4c4c4; }
.combo select { flex: 1; min-width: 0; height: 20px; padding: 0 2px; border: 0; outline: 0; appearance: none; background: none; }
.chev { width: 11px; height: 100%; background: #e1e1e1; box-shadow: inset 0 0 0 1px #b4b4b4; }
.filter { width: 106px; background: #b1cfee; }
.filter .chev { background: #c2cfdc; opacity: .6; }
.group > .filter + button { width: 23px; margin-right: 2px; }
.defaults { width: 120px; }
.cwdlabel { width: 128px; padding-left: 2px; font-size: 11px; white-space: nowrap; }
.cwd { width: 127px; }
.sunk { border: 2px solid #8a8a8a; border-right-color: #bcbcbc; border-bottom-color: #bcbcbc; box-shadow: none; padding: 0; }
.spin { width: 10px; height: 100%; display: grid; place-items: center; background: #f2f2f2; border-right: 1px solid #ccc; }
.spin svg { width: 8px; height: 18px; }
.dim svg { fill: #777; }

.work { flex: 1; min-height: 0; display: flex; }
.side { flex: 0 0 391px; display: flex; flex-direction: column; padding: 7px 5px 4px 2px; background: #f8f8f8; }
.tabs { display: flex; align-items: flex-end; height: 23px; flex: none; }
.tabs button { width: 53px; height: 21px; padding-top: 2px; border: 1px solid #d9d9d9; border-bottom: 0; background: #f0f0f0; }
.tabs .active { height: 24px; margin-bottom: -1px; background: #fff; position: relative; padding-top: 0; }
.pane { flex: 1; min-height: 0; display: flex; flex-direction: column; border: 1px solid #dcdcdc; border-width: 1px 1px 0; padding: 5px 0 0 2px; background: #fff; }
.dbrow { display: flex; align-items: center; gap: 9px; height: 23px; margin-bottom: 4px; }
.db { flex: 1; height: 23px; margin-right: -5px; padding-left: 3px; }
.treebox { flex: 1; min-height: 0; overflow: hidden; border: 1px solid #a8a8a8; background: #fff; }
.tree, .tree ul { list-style: none; margin: 0; padding: 0; }
.tree ul { padding-left: 17px; }
.tree li { position: relative; }
.tree li::before { content: ""; position: absolute; left: 6px; top: 0; bottom: 0; border-left: 1px dotted #999; }
.tree li:last-child::before { bottom: auto; height: 10px; }
.tree > li:first-child::before { top: 10px; }
.row { display: flex; align-items: center; height: 19px; white-space: nowrap; }
.tog { position: relative; width: 9px; height: 9px; margin: 0 6px 0 2px; flex: none; border: 1px solid #999; background: linear-gradient(#2a4a9a, #2a4a9a) center / 5px 1px no-repeat #f6f6f6; }
.plus { background: linear-gradient(#2a4a9a, #2a4a9a) center / 5px 1px no-repeat, linear-gradient(#2a4a9a, #2a4a9a) center / 1px 5px no-repeat #f6f6f6; }
.stub { width: 6px; margin: 0 4px 0 7px; border-top: 1px dotted #999; flex: none; }
.ti { width: 16px; height: 16px; margin-right: 6px; margin-left: -3px; }
.current { color: #000; text-decoration: none; border-bottom: 2px solid #000; line-height: 15px; margin-left: -1px; }

.stage { flex: 1; min-width: 0; display: flex; flex-direction: column; }
.context { display: flex; align-items: center; height: 31px; flex: none; padding: 0 0 0 8px; background: linear-gradient(#fafafa, #efefef); }
.context label, .object span { white-space: nowrap; }
.module { width: 107px; margin: 0 13px 0 2px; }
.model { width: 88px; margin: 0 13px 0 5px; }
.partsel { width: 88px; margin-left: 3px; }
.object { display: flex; align-items: center; gap: 2px; }
.object input { appearance: none; width: 13px; height: 13px; border: 1px solid #333; border-radius: 50%; background: #fff; }
.object input:checked { background: radial-gradient(#222 0 3px, #fff 4px); }

.canvasrow { flex: 1; min-height: 0; display: flex; }
.toolbox { position: relative; flex: 0 0 66px; padding: 5px 3px 0 2px; background: linear-gradient(90deg, #fcfcfc, #ececec); }
.tools { display: grid; grid-template-columns: 28px 28px; grid-auto-rows: 28px; padding: 3px 0 3px 2px; border-bottom: 1px solid #a6a6a6; }
.tools:first-child { padding-top: 0; padding-bottom: 2px; }
.tools:last-of-type { border: 0; }
.tools button { display: grid; place-items: center; width: 26px; height: 26px; }
.tools button svg { width: 24px; height: 24px; }
.callout { position: absolute; right: 66px; top: 23px; width: 72px; height: 50px; }
.viewport { flex: 1; min-width: 0; border: 1px solid #6d6d6d; border-right-color: #aaa; border-bottom-color: #aaa; background: linear-gradient(#1b2d47, #2b3d56 50%, #43546e 69%, #a3b1c8); }
.viewport svg { width: 100%; height: 100%; }
.axis { font: 9px "DejaVu Sans", sans-serif; fill: #f0f000; }
.triad { font: 15px "Liberation Sans", sans-serif; fill: #fff; }

.prompt { display: flex; align-items: center; gap: 5px; height: 37px; flex: none; padding: 0 3px 2px 7px; background: linear-gradient(#fcfcfc, #eeeeee); }
.pb { min-width: 18px; height: 21px; border: 1px solid #adadad; background: #e1e1e1; display: grid; place-items: center; }
.pb svg { width: 16px; height: 16px; }
.pb.off { background: #ccc; }
.question { margin: 0 -2px 0 1px; white-space: nowrap; }
.pb:not([aria-label]) { min-width: 24px; }
.pb.default { border: 2px solid #0078d7; }
.brand { margin-left: auto; display: flex; align-items: center; gap: 5px; color: #12a5a0; font: italic bold 16px "DejaVu Sans", sans-serif; }
.brand svg { width: 22px; height: 24px; }
```
